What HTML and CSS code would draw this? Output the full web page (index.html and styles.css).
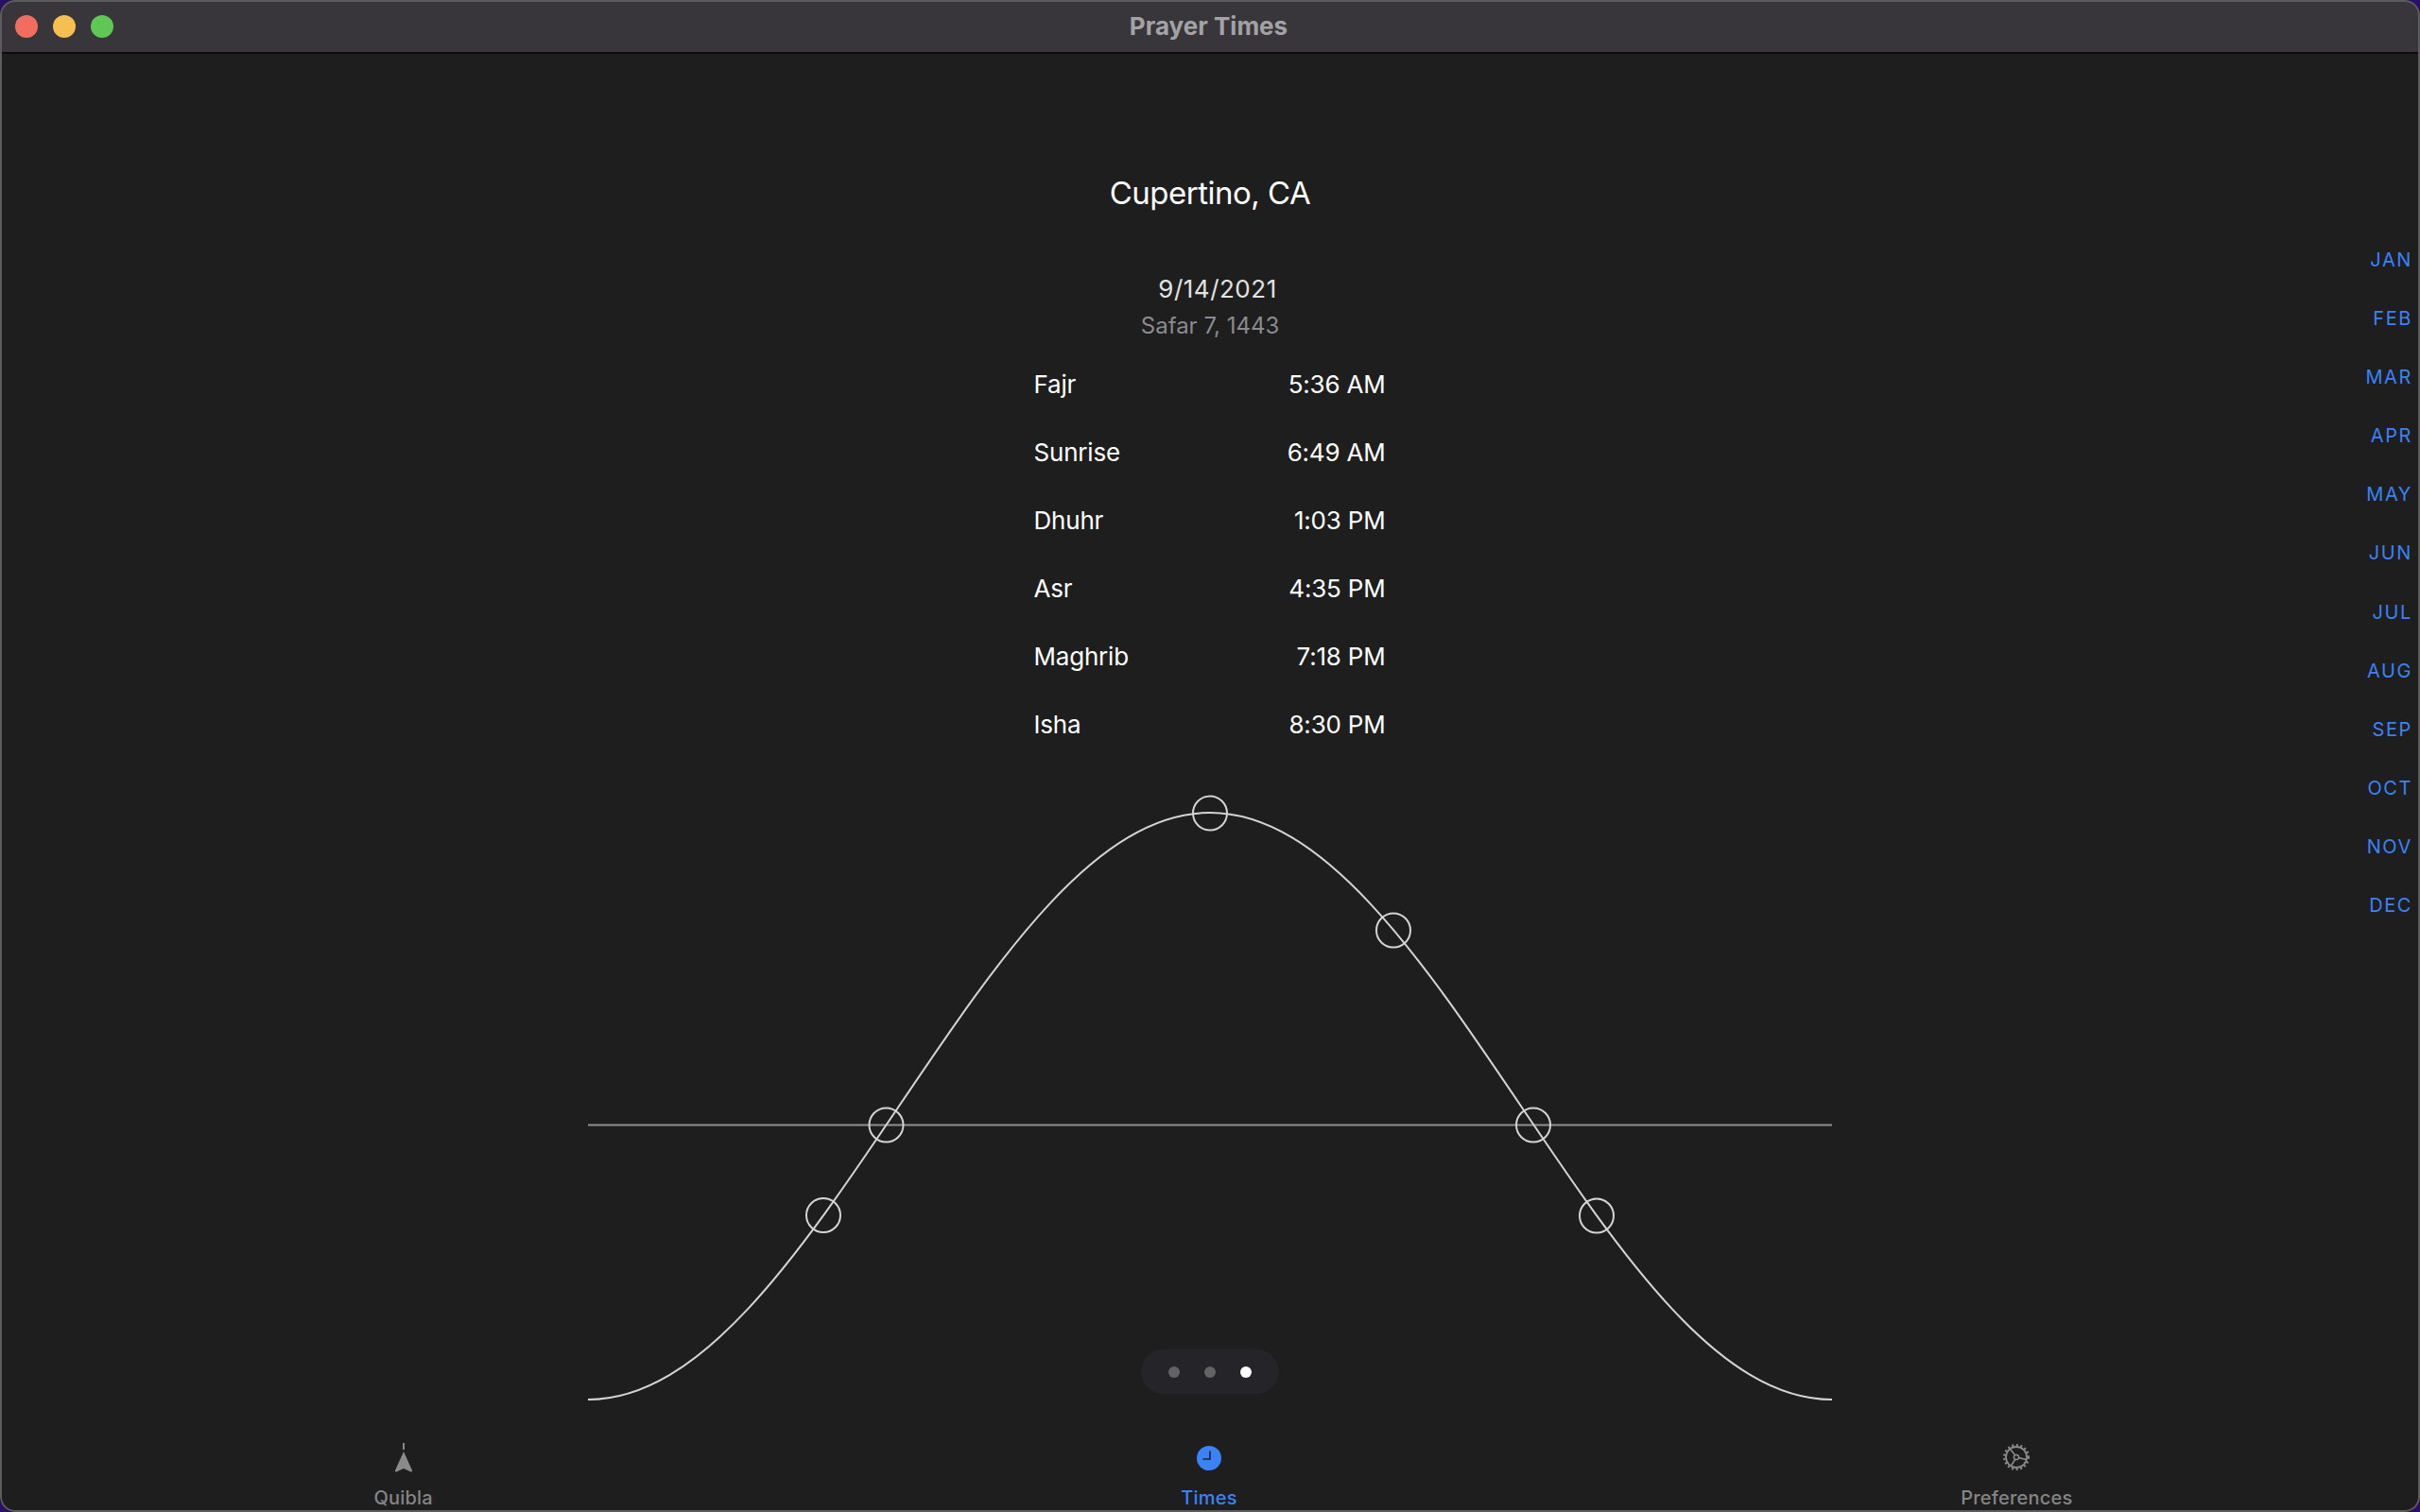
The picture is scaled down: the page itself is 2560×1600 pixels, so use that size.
FILE: index.html
```html
<!DOCTYPE html>
<html lang="en">
<head>
<meta charset="utf-8">
<title>Prayer Times</title>
<link rel="stylesheet" href="styles.css">
</head>
<body>
<div class="window">
  <header class="titlebar">
    <div class="lights">
      <span class="light red"></span>
      <span class="light yellow"></span>
      <span class="light green"></span>
    </div>
    <div class="wintitle">Prayer Times</div>
  </header>
  <main class="content">
    <h1 class="city">Cupertino, CA</h1>
    <div class="date">9/14/2021</div>
    <div class="hijri">Safar 7, 1443</div>
    <ul class="times">
      <li class="row"><span>Fajr</span><span>5:36 AM</span></li>
      <li class="row"><span>Sunrise</span><span>6:49 AM</span></li>
      <li class="row"><span>Dhuhr</span><span>1:03 PM</span></li>
      <li class="row"><span>Asr</span><span>4:35 PM</span></li>
      <li class="row"><span>Maghrib</span><span>7:18 PM</span></li>
      <li class="row"><span>Isha</span><span>8:30 PM</span></li>
    </ul>
    <svg class="chart" width="1318" height="642" viewBox="621 840 1318 642" aria-hidden="true">
      <line class="horizon" x1="622" y1="1190.5" x2="1938" y2="1190.5"/>
      <path class="curve" d="M622 1481C741.07 1481 843.7 1329.57 951 1170.5C1058.3 1011.43 1160.93 860 1280 860C1399.07 860 1501.7 1011.43 1609 1170.5C1716.3 1329.57 1818.93 1481 1938 1481"/>
      <circle class="mark" cx="871" cy="1286" r="18"/>
      <circle class="mark" cx="937.5" cy="1190.5" r="18"/>
      <circle class="mark" cx="1280" cy="860.5" r="18"/>
      <circle class="mark" cx="1474" cy="984.5" r="18"/>
      <circle class="mark" cx="1622" cy="1190.5" r="18"/>
      <circle class="mark" cx="1689" cy="1286.5" r="18"/>
    </svg>
    <div class="pager">
      <span class="dot"></span>
      <span class="dot"></span>
      <span class="dot on"></span>
    </div>
    <ol class="months">
      <li>JAN</li><li>FEB</li><li>MAR</li><li>APR</li><li>MAY</li><li>JUN</li>
      <li>JUL</li><li>AUG</li><li>SEP</li><li>OCT</li><li>NOV</li><li>DEC</li>
    </ol>
  </main>
  <nav class="tabbar">
    <div class="tab">
      <svg class="icon" width="26" height="34" viewBox="0 0 26 34" aria-hidden="true">
        <rect x="12" y="1" width="2" height="7" fill="#8a8a8a"/>
        <path d="M13 10L22 30Q22.3 32 20.6 31.5L13 28L5.4 31.5Q3.7 32 4 30Z" fill="#8a8a8a"/>
      </svg>
      <span class="label">Quibla</span>
    </div>
    <div class="tab active">
      <svg class="icon" width="26" height="34" viewBox="0 0 26 34" aria-hidden="true">
        <circle cx="13" cy="17" r="13" fill="#3b82f6"/>
        <path d="M14 9.5V18H6.5" fill="none" stroke="#1e2430" stroke-width="1.6"/>
      </svg>
      <span class="label">Times</span>
    </div>
    <div class="tab">
      <svg class="icon" width="30" height="34" viewBox="0 0 30 34" aria-hidden="true">
        <circle cx="15" cy="16" r="11" fill="none" stroke="#8a8a8a" stroke-width="1.8"/>
        <circle cx="15" cy="16" r="12.8" fill="none" stroke="#8a8a8a" stroke-width="2.4" stroke-dasharray="2 2.6"/>
        <circle cx="15" cy="16" r="2.6" fill="none" stroke="#8a8a8a" stroke-width="1.5"/>
        <path d="M17.5 16.6L25.5 18.5M13.6 13.8L8.6 7.6M13.8 18.2L9.4 25" fill="none" stroke="#8a8a8a" stroke-width="1.6"/>
      </svg>
      <span class="label">Preferences</span>
    </div>
  </nav>
</div>
</body>
</html>
```
FILE: styles.css
```css
* { box-sizing: border-box; }
html, body { margin: 0; padding: 0; }
body {
  width: 2560px;
  height: 1600px;
  overflow: hidden;
  background: #2a1068;
  font-family: Inter, "Liberation Sans", sans-serif;
}
.window {
  width: 2560px;
  height: 1600px;
  display: flex;
  flex-direction: column;
  background: #1e1e1e;
  border-radius: 16px;
  overflow: hidden;
  position: relative;
}
.window::after {
  content: "";
  position: absolute;
  inset: 0;
  border: 2px solid #5c5c5e;
  border-radius: 16px;
  pointer-events: none;
}
.titlebar {
  height: 57px;
  flex: none;
  display: flex;
  align-items: center;
  justify-content: center;
  position: relative;
  background: #38363b;
  border-bottom: 2px solid #0c0c0c;
}
.lights {
  position: absolute;
  left: 16px;
  top: 16px;
  display: flex;
  gap: 16px;
}
.light { width: 24px; height: 24px; border-radius: 50%; }
.red { background: #f26d60; }
.yellow { background: #f6bf4f; }
.green { background: #5fc854; }
.wintitle {
  font-size: 26px;
  font-weight: 700;
  color: #a3a2a5;
  margin-right: 3px;
}
.content {
  flex: 1;
  position: relative;
  display: flex;
  flex-direction: column;
  align-items: center;
  min-height: 0;
}
.city {
  margin: 125px 0 0;
  font-size: 33px;
  line-height: 44px;
  font-weight: 400;
  color: #ffffff;
  letter-spacing: -0.5px;
}
.date {
  margin: 64px 0 0 16px;
  font-size: 26px;
  line-height: 32px;
  color: #e2e2e2;
  letter-spacing: 0.5px;
}
.hijri {
  margin-top: 7px;
  font-size: 24px;
  line-height: 32px;
  color: #8b8b8f;
}
.times {
  list-style: none;
  margin: 9px 0 0 -1px;
  padding: 0;
  width: 372px;
}
.row {
  height: 72px;
  display: flex;
  justify-content: space-between;
  align-items: center;
  font-size: 26px;
  letter-spacing: -0.2px;
  color: #ffffff;
}
.chart {
  position: absolute;
  left: 621px;
  top: 783px;
}
.horizon { stroke: #8f8f8f; stroke-width: 2; }
.curve { fill: none; stroke: #d4d4d4; stroke-width: 2; }
.mark { fill: none; stroke: #d4d4d4; stroke-width: 2; }
.pager {
  position: absolute;
  left: 1207px;
  top: 1371px;
  width: 146px;
  height: 47px;
  border-radius: 23.5px;
  background: #252429;
  display: flex;
  align-items: center;
  justify-content: center;
  gap: 26px;
}
.dot { width: 12px; height: 12px; border-radius: 50%; background: #636366; }
.dot.on { background: #ffffff; }
.months {
  list-style: none;
  margin: 0;
  padding: 0;
  position: absolute;
  right: 8px;
  top: 207px;
  display: flex;
  flex-direction: column;
  align-items: flex-end;
  gap: 40.1px;
  font-size: 20px;
  line-height: 22px;
  letter-spacing: 1.6px;
  color: #3b82f6;
}
.tabbar {
  flex: none;
  height: 76px;
  display: grid;
  grid-template-columns: repeat(3, 1fr);
  padding-top: 2px;
}
.tab {
  display: flex;
  flex-direction: column;
  align-items: center;
  color: #858585;
}
.tab.active { color: #3b82f6; padding-right: 2px; }
.icon { display: block; }
.label {
  font-size: 20px;
  line-height: 24px;
  font-weight: 500;
  margin-top: 13px;
  letter-spacing: 0.2px;
}
```
